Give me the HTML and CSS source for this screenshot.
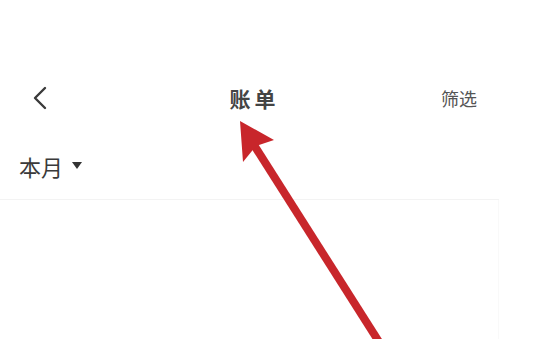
FILE: index.html
```html
<!DOCTYPE html>
<html lang="zh-CN">
<head>
  <meta charset="UTF-8">
  <meta name="viewport" content="width=device-width, initial-scale=1.0">
  <title>账单</title>
  <link rel="stylesheet" href="styles.css">
</head>
<body>
  <div class="page">
    <div class="header">
      <span class="back">
        <svg width="16" height="24" viewBox="0 0 16 24">
          <polyline points="13,2 3,12 13,22" fill="none" stroke="#3a3a3a" stroke-width="2.4" stroke-linecap="round" stroke-linejoin="round"/>
        </svg>
      </span>
      <h1 class="title">账单</h1>
      <span class="filter">筛选</span>
    </div>

    <div class="month">
      <span class="month-label">本月</span>
      <span class="caret"></span>
    </div>

    <div class="list"></div>
  </div>

  <!-- annotation arrow pointing at the title -->
  <svg class="arrow" width="543" height="339" viewBox="0 0 543 339">
    <line x1="247" y1="134" x2="381" y2="345" stroke="#c8262b" stroke-width="8"/>
    <polygon points="240,121 274,140 256,146 243,162" fill="#c8262b"/>
  </svg>
</body>
</html>
```

FILE: styles.css
```css
  body {
    margin: 0;
    background: #fff;
    font-family: "Noto Sans CJK SC", "Noto Sans", sans-serif;
    color: #333;
  }

  .page {
    width: 499px;
    min-height: 339px;
    padding-top: 75px;
    box-sizing: border-box;
  }

  .header {
    display: flex;
    align-items: center;
    justify-content: space-between;
    height: 45px;
    padding: 0 22px 0 32px;
  }

  .back {
    display: flex;
    width: 60px;
  }

  .title {
    margin: 0;
    font-size: 21px;
    font-weight: bold;
    letter-spacing: 4px;
    color: #444;
  }

  .filter {
    width: 60px;
    text-align: right;
    font-size: 18px;
    color: #555;
  }

  .month {
    display: flex;
    align-items: center;
    height: 67px;
    padding: 12px 0 0 19px;
    border-bottom: 1px solid #f3f3f3;
  }

  .month-label {
    font-size: 22px;
    color: #3a3a3a;
  }

  .caret {
    width: 0;
    height: 0;
    margin-left: 9px;
    border-left: 5px solid transparent;
    border-right: 5px solid transparent;
    border-top: 7px solid #333;
  }

  .list {
    height: 140px;
    border-right: 1px solid #f9f9f9;
  }

  .arrow {
    position: absolute;
    left: 0;
    top: 0;
    pointer-events: none;
  }
```
